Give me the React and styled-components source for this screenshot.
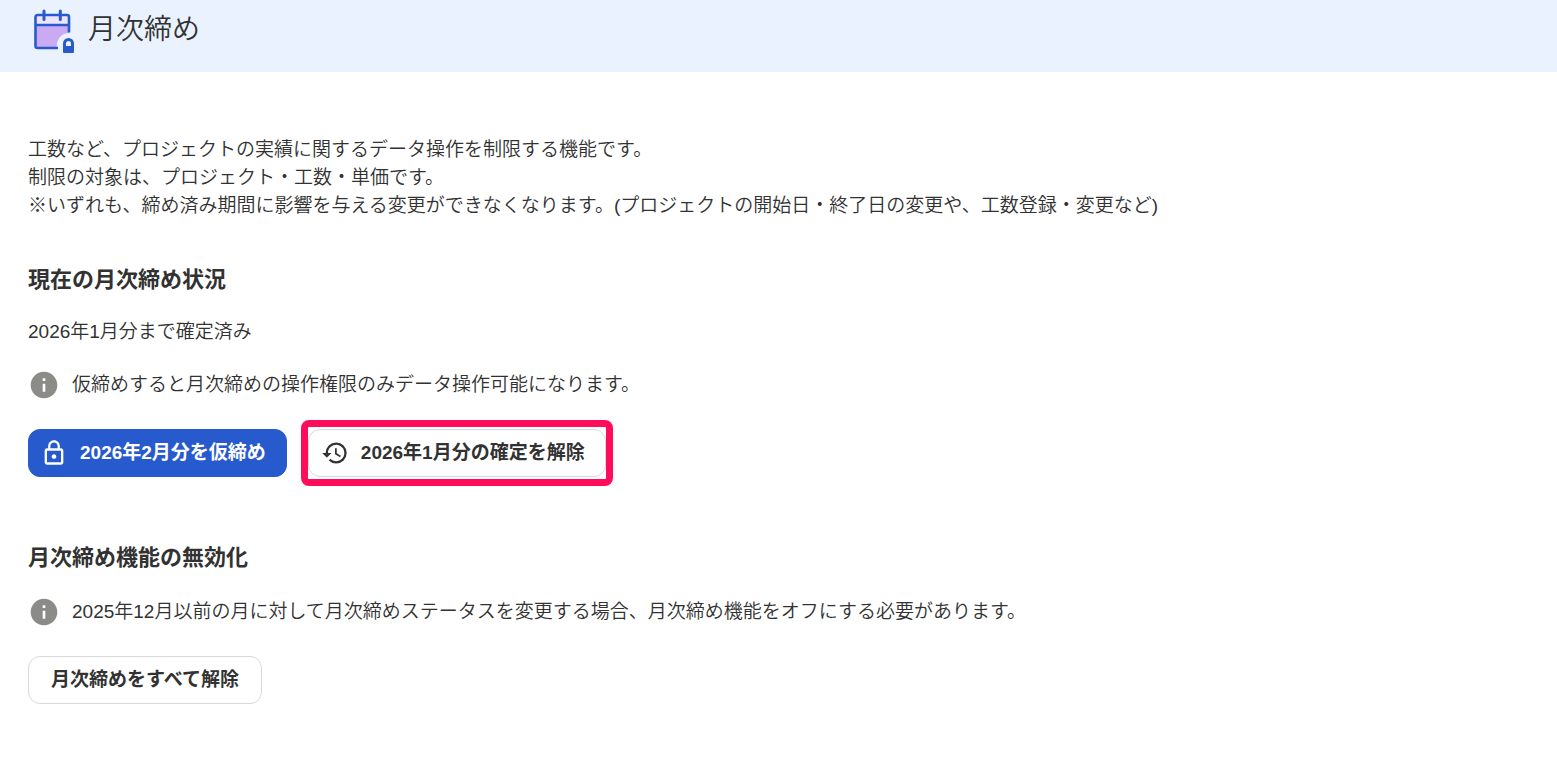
import React from 'react';
import styled, { createGlobalStyle } from 'styled-components';
import { MdHistory, MdInfo, MdLockOutline } from 'react-icons/md';

const description = [
  '工数など、プロジェクトの実績に関するデータ操作を制限する機能です。',
  '制限の対象は、プロジェクト・工数・単価です。',
  '※いずれも、締め済み期間に影響を与える変更ができなくなります。(プロジェクトの開始日・終了日の変更や、工数登録・変更など)',
];

function CalendarLockIcon() {
  return (
    <svg width="44" height="46" viewBox="0 0 44 46" fill="none" aria-hidden="true">
      <path d="M3.500 18h33.500v8a12.500 12.500 0 0 0-12 15H3.500z" fill="#caabf3" />
      <path d="M3.500 8H37v10H3.500z" fill="#efe4fd" />
      <g stroke="#275bcd" strokeWidth="2.6">
        <path d="M26 41H5.500a2 2 0 0 1-2-2V10a2 2 0 0 1 2-2H35a2 2 0 0 1 2 2v15.500" />
        <path d="M3.500 18H37" />
        <path d="M12 4v8.500M28.300 4v8.500" strokeWidth="3" strokeLinecap="round" />
      </g>
      <path
        d="M31 45v-8.500a5.500 5.500 0 0 1 11 0V45a1 1 0 0 1-1 1h-9a1 1 0 0 1-1-1zM34 39h5v-2.500a2.500 2.500 0 0 0-5 0z"
        fill="#275bcd"
        fillRule="evenodd"
      />
    </svg>
  );
}

function App() {
  return (
    <>
      <GlobalStyle />
      <Header>
        <CalendarLockIcon />
        <PageTitle>月次締め</PageTitle>
      </Header>
      <Content>
        <Description>
          {description.map(line => (
            <p key={line}>{line}</p>
          ))}
        </Description>
        <Section>
          <SectionTitle>現在の月次締め状況</SectionTitle>
          <Status>2026年1月分まで確定済み</Status>
          <Note>
            <MdInfo size={32} color="#8b8b88" aria-hidden="true" />
            仮締めすると月次締めの操作権限のみデータ操作可能になります。
          </Note>
          <ButtonRow>
            <Button type="button" $primary>
              <MdLockOutline size={28} aria-hidden="true" />
              2026年2月分を仮締め
            </Button>
            <Highlight>
              <Button type="button">
                <MdHistory size={28} aria-hidden="true" />
                2026年1月分の確定を解除
              </Button>
            </Highlight>
          </ButtonRow>
        </Section>
        <Section>
          <SectionTitle>月次締め機能の無効化</SectionTitle>
          <Note>
            <MdInfo size={32} color="#8b8b88" aria-hidden="true" />
            2025年12月以前の月に対して月次締めステータスを変更する場合、月次締め機能をオフにする必要があります。
          </Note>
          <ButtonRow>
            <Button type="button" $wide>月次締めをすべて解除</Button>
          </ButtonRow>
        </Section>
      </Content>
    </>
  );
}

export default App;

const GlobalStyle = createGlobalStyle`
  * {
    box-sizing: border-box;
  }

  body {
    margin: 0;
    background-color: #ffffff;
    color: #323232;
    font-family: "Liberation Sans", "Noto Sans CJK JP", sans-serif;
    font-size: 19px;
    font-weight: 350;
    line-height: 28px;
  }

  h1, h2, p {
    margin: 0;
  }
`;

const Header = styled.header`
  display: flex;
  align-items: center;
  gap: 12px;
  height: 72px;
  padding: 0 32px 12px;
  background-color: #eaf2ff;
`;

const PageTitle = styled.h1`
  font-size: 28px;
  font-weight: 350;
  line-height: 40px;
`;

const Content = styled.main`
  padding: 64px 28px 28px;
`;

const Description = styled.div`
  margin-bottom: 44px;
`;

const Section = styled.section`
  & + & {
    margin-top: 65px;
  }
`;

const SectionTitle = styled.h2`
  margin-bottom: 22px;
  font-size: 22px;
  line-height: 32px;
`;

const Status = styled.p`
  margin-bottom: 23px;
`;

const Note = styled.p`
  display: flex;
  align-items: center;
  gap: 12px;
  margin-bottom: 28px;
`;

const ButtonRow = styled.div`
  display: flex;
  align-items: center;
  gap: 21px;
`;

const Button = styled.button`
  display: flex;
  align-items: center;
  gap: 12px;
  min-height: 48px;
  padding: 0 ${props => (props.$wide ? '22px' : props.$primary ? '20px 0 11px' : '20px 0 12px')};
  border: 1px solid ${props => (props.$primary ? '#275bcd' : '#d9d9d9')};
  border-radius: 12px;
  background-color: ${props => (props.$primary ? '#275bcd' : '#ffffff')};
  color: ${props => (props.$primary ? '#ffffff' : '#323232')};
  font: inherit;
  font-weight: bold;
  cursor: pointer;
`;

// Ring drawn around the button without taking any room in the row
const Highlight = styled.div`
  position: relative;

  &::after {
    content: '';
    position: absolute;
    inset: -9px -7px;
    border: 7px solid #ff0d5b;
    border-radius: 8px;
    pointer-events: none;
  }
`;
